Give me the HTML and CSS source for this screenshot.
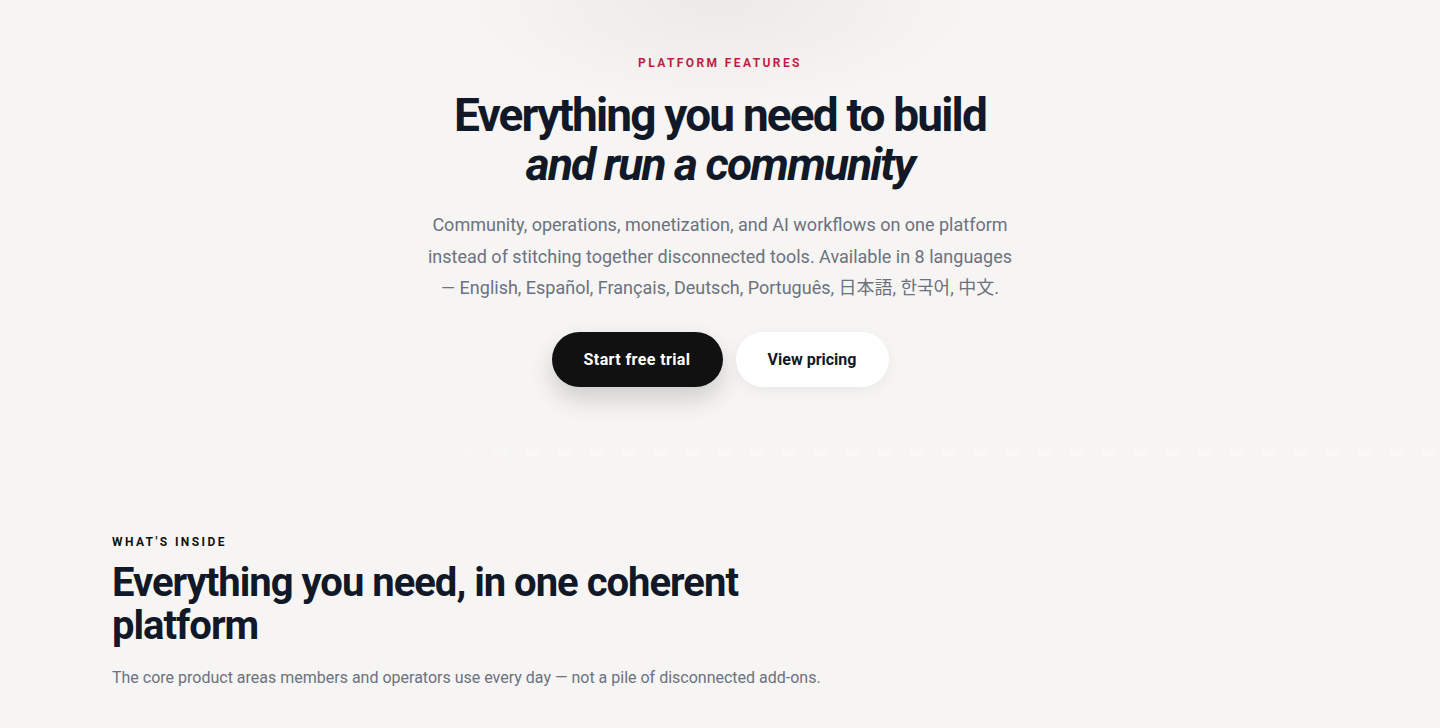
FILE: index.html
```html
<!DOCTYPE html>
<html lang="en">
<head>
<meta charset="utf-8">
<title>Platform features</title>
<link rel="stylesheet" href="styles.css">
</head>
<body>
<section class="hero">
  <p class="eyebrow">PLATFORM FEATURES</p>
  <h1 class="hero-title">Everything you need to build<br><em>and run a community</em></h1>
  <p class="hero-lead">Community, operations, monetization, and AI workflows on one platform instead of stitching together disconnected tools. Available in 8 languages — English, Español, Français, Deutsch, Português, 日本語, 한국어, 中文.</p>
  <div class="actions">
    <a class="btn btn-primary" href="#">Start free trial</a>
    <a class="btn btn-secondary" href="#">View pricing</a>
  </div>
</section>
<div class="dash-strip"></div>
<section class="inside">
  <p class="eyebrow eyebrow-dark">WHAT'S INSIDE</p>
  <h2 class="inside-title">Everything you need, in one coherent platform</h2>
  <p class="inside-lead">The core product areas members and operators use every day — not a pile of disconnected add-ons.</p>
</section>
</body>
</html>
```
FILE: styles.css
```css
* { box-sizing: border-box; }
html, body { margin: 0; padding: 0; }
body {
  background: #f6f5f3;
  font-family: Roboto, "Noto Sans CJK JP", "Noto Sans CJK KR", "Noto Sans CJK SC", sans-serif;
  color: #111827;
  min-height: 728px;
}
.hero {
  display: flex;
  flex-direction: column;
  align-items: center;
  text-align: center;
  padding-top: 55px;
  background: radial-gradient(ellipse 260px 110px at 50% 0, rgba(0,0,0,0.045), rgba(0,0,0,0) 100%);
}
.eyebrow {
  margin: 0;
  font-size: 12px;
  line-height: 16px;
  font-weight: 700;
  letter-spacing: 0.2em;
  color: #be1e46;
}
.eyebrow-dark { color: #111111; }
.hero-title {
  margin: 20px 0 0;
  font-size: 46px;
  line-height: 49px;
  font-weight: 700;
  letter-spacing: -0.04em;
  color: #111827;
}
.hero-title em { font-style: italic; }
.hero-lead {
  margin: 20px 0 0;
  max-width: 600px;
  font-size: 18px;
  line-height: 31.5px;
  color: #6b7280;
}
.actions {
  display: flex;
  gap: 13px;
  margin-top: 28px;
}
.btn {
  display: inline-flex;
  align-items: center;
  justify-content: center;
  height: 55px;
  border-radius: 999px;
  font-size: 16px;
  font-weight: 700;
  text-decoration: none;
}
.btn-primary {
  width: 171px;
  background: #111111;
  color: #ffffff;
  letter-spacing: 0.4px;
  box-shadow: 0 12px 24px rgba(0,0,0,0.16);
}
.btn-secondary {
  width: 153px;
  background: #ffffff;
  color: #111827;
  box-shadow: 0 4px 14px rgba(0,0,0,0.05);
}
.dash-strip {
  margin-top: 62px;
  height: 7px;
  background-image: repeating-linear-gradient(to right, rgba(255,255,255,0.35) 0 15px, transparent 15px 32px);
  background-position: 461px 0;
  -webkit-mask-image: linear-gradient(to right, transparent 31%, #000 36%);
  mask-image: linear-gradient(to right, transparent 31%, #000 36%);
}
.inside {
  padding: 78px 112px 0;
}
.inside-title {
  margin: 11px 0 0;
  max-width: 680px;
  font-size: 40px;
  line-height: 43px;
  font-weight: 700;
  letter-spacing: -0.025em;
  color: #111827;
}
.inside-lead {
  margin: 19px 0 0;
  font-size: 16px;
  line-height: 24px;
  color: #6b7280;
}
```
